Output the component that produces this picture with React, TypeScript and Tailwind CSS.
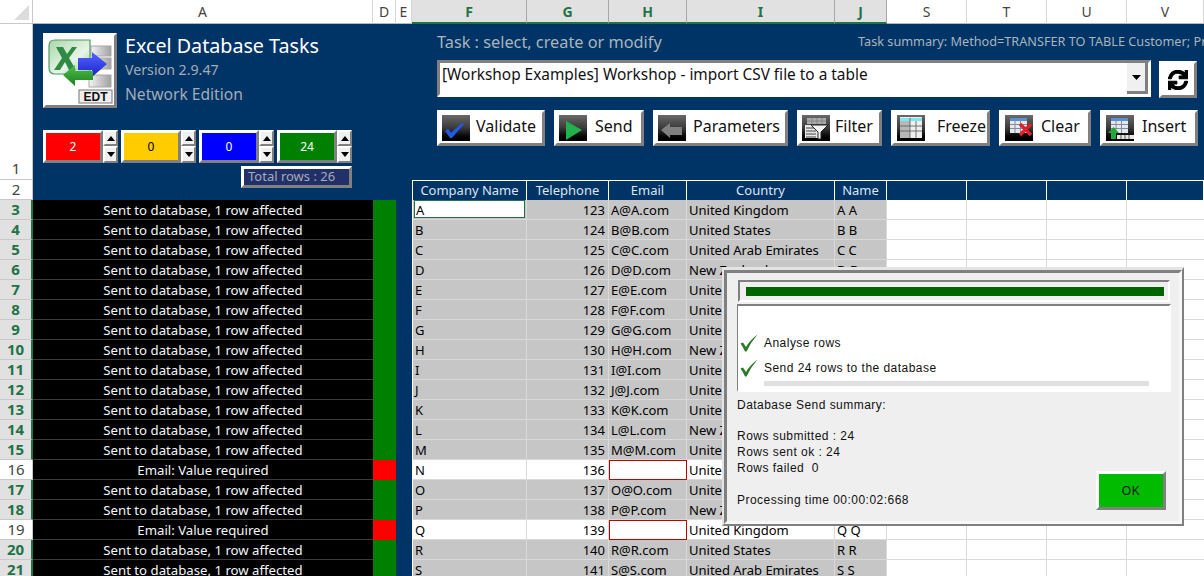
import { FaSync } from "react-icons/fa";

const bevel = "border-t-white border-l-white border-r-[#808080] border-b-[#808080]";

const columns = [
    { name: "A", w: "w-[340px]", on: false },
    { name: "D", w: "w-[23px]", on: false },
    { name: "E", w: "w-[16px]", on: false },
    { name: "F", w: "w-[115px]", on: true },
    { name: "G", w: "w-[82px]", on: true },
    { name: "H", w: "w-[78px]", on: true },
    { name: "I", w: "w-[148px]", on: true },
    { name: "J", w: "w-[52px]", on: true },
    { name: "S", w: "w-[80px]", on: false },
    { name: "T", w: "w-[80px]", on: false },
    { name: "U", w: "w-[80px]", on: false },
    { name: "V", w: "w-[77px]", on: false },
];

const countries = ["United Kingdom", "United States", "United Arab Emirates", "New Zealand"];
const letters = "ABCDEFGHIJKLMNOPQRS".split("");

function ColumnHeaders() {
    return (
        <div className="flex h-[24px] shrink-0">
            <div className="flex h-[24px] w-[33px] items-end justify-end border-r border-b border-[#c8c8c8] bg-white pr-[3px] pb-[3px]">
                <svg width="15" height="15" viewBox="0 0 15 15"><polygon points="15,0 15,15 0,15" fill="#dcdcdc" /></svg>
            </div>
            {columns.map((c) => (
                <div
                    key={c.name}
                    className={
                        c.on
                            ? `${c.w} flex h-[24px] items-center justify-center border-r border-r-[#a8a8a8] border-b-2 border-b-[#217346] bg-[#e1e1e1] text-[14px] font-bold text-[#217346]`
                            : `${c.w} flex h-[24px] items-center justify-center border-r border-r-[#d8d8d8] border-b border-b-[#b8b8b8] bg-white text-[14px] text-[#444]`
                    }
                >
                    {c.name}
                </div>
            ))}
        </div>
    );
}

function Logo() {
    return (
        <div className={`h-[75px] w-[74px] shrink-0 border-[3px] bg-white ${bevel}`}>
            <svg width="68" height="69" viewBox="3 3 68 69">
                <defs>
                    <linearGradient id="doc" x1="0" y1="0" x2="1" y2="1">
                        <stop offset="0" stopColor="#a8d8a8" />
                        <stop offset="0.6" stopColor="#e8f4e8" />
                        <stop offset="1" stopColor="#8fc79a" />
                    </linearGradient>
                    <linearGradient id="cyl" x1="0" y1="0" x2="1" y2="0">
                        <stop offset="0" stopColor="#f4f4f4" />
                        <stop offset="1" stopColor="#a0a0a0" />
                    </linearGradient>
                    <linearGradient id="blueArrow" x1="0" y1="0" x2="0" y2="1">
                        <stop offset="0" stopColor="#5566ff" />
                        <stop offset="1" stopColor="#1a22cc" />
                    </linearGradient>
                    <linearGradient id="greenArrow" x1="0" y1="0" x2="0" y2="1">
                        <stop offset="0" stopColor="#4cc04c" />
                        <stop offset="1" stopColor="#1c801c" />
                    </linearGradient>
                </defs>
                <rect x="48" y="13" width="20" height="10" fill="url(#cyl)" stroke="#a8a8a8" />
                <rect x="48" y="25" width="20" height="11" fill="url(#cyl)" stroke="#a8a8a8" />
                <rect x="46" y="42" width="22" height="12" fill="url(#cyl)" stroke="#a8a8a8" />
                <path d="M12 7 H47 V41 H12 Q6 41 6 35 V13 Q6 7 12 7 Z" fill="url(#doc)" stroke="#4f9a62" strokeWidth="1.2" />
                <path d="M13 14 H20 L24 21 L29 14 H34 L26 25 L33 37 H26 L22 29 L17 37 H11 L19 25 Z" fill="#2f8a45" />
                <polygon points="35,25 49,25 49,19 64,31 49,44 49,37 35,37" fill="url(#blueArrow)" />
                <polygon points="20,42 32,32 32,38 50,38 50,47 32,47 32,53" fill="url(#greenArrow)" />
                <rect x="36" y="57" width="33" height="13" fill="#eeeeee" stroke="#777" />
                <text x="52.5" y="68" textAnchor="middle" fontSize="12" fontWeight="700" fill="#111" fontFamily="Liberation Sans, sans-serif">EDT</text>
            </svg>
        </div>
    );
}

function SpinBox({ value, bg, fg }: { value: number; bg: string; fg: string }) {
    return (
        <div className="flex">
            <div className={`flex h-[33px] w-[60px] items-center justify-center border-[3px] text-[12px] ${bevel} ${bg} ${fg}`}>{value}</div>
            <div className="flex w-[15px] flex-col">
                <div className={`flex h-[16px] w-[15px] items-center justify-center border-2 bg-[#f0f0f0] ${bevel}`}>
                    <svg width="8" height="5" viewBox="0 0 8 5"><polygon points="4,0 8,5 0,5" fill="#000" /></svg>
                </div>
                <div className={`flex h-[17px] w-[15px] items-center justify-center border-2 bg-[#f0f0f0] ${bevel}`}>
                    <svg width="8" height="5" viewBox="0 0 8 5"><polygon points="0,0 8,0 4,5" fill="#000" /></svg>
                </div>
            </div>
        </div>
    );
}

function LeftPanel() {
    return (
        <div className="flex h-[176px] w-[379px] shrink-0 flex-col pt-[9px] pl-[10px]">
            <div className="flex gap-[8px]">
                <Logo />
                <div className="flex flex-col">
                    <span className="-mt-[1px] text-[19.7px] leading-[27px] text-white">Excel Database Tasks</span>
                    <span className="mt-[1px] text-[14.2px] leading-[20px] text-[#a3adb6]">Version 2.9.47</span>
                    <span className="mt-[3px] text-[15.6px] leading-[22px] text-[#a3adb6]">Network Edition</span>
                </div>
            </div>
            <div className="mt-[22px] flex gap-[3px]">
                <SpinBox value={2} bg="bg-[#ff0000]" fg="text-white" />
                <SpinBox value={0} bg="bg-[#ffcc00]" fg="text-black" />
                <SpinBox value={0} bg="bg-[#0000ff]" fg="text-white" />
                <SpinBox value={24} bg="bg-[#008000]" fg="text-white" />
            </div>
            <div className="mt-[3px] flex w-[309px] justify-end">
                <div className={`flex h-[22px] w-[111px] items-center border-[3px] bg-[#22306a] pl-[4px] text-[13px] text-[#a3adb6] ${bevel}`}>
                    Total rows : 26
                </div>
            </div>
        </div>
    );
}

function IconTile({ children }: { children: React.ReactNode }) {
    return (
        <div className="h-[26px] w-[28px] shrink-0 bg-linear-to-b from-[#6a6a6a] via-[#3a3a3a] to-black">
            <svg width="28" height="26" viewBox="0 0 28 26">{children}</svg>
        </div>
    );
}

function MiniTable({ top = "#5b8fd0" }: { top?: string }) {
    return (
        <g>
            <rect x="5" y="3" width="17" height="15" fill="#e8e8e8" />
            <rect x="5" y="3" width="17" height="3" fill={top} />
            <path d="M5 9.5H22M5 13.5H22M10 6V18M15.5 6V18" stroke="#7a8ea8" strokeWidth="1" />
        </g>
    );
}

const tools = [
    {
        label: "Validate",
        w: "w-[108px]",
        pl: "pl-[2px]",
        gap: "gap-[6px]",
        icon: <path d="M3 16 L6 13.5 L9 17.5 L20 8 L22 9 L10 23 L8 23 Z" fill="#2458e0" />,
    },
    {
        label: "Send",
        w: "w-[90px]",
        pl: "pl-[2px]",
        gap: "gap-[8px]",
        icon: <polygon points="7,6 7,25 23,15" fill="#22b14c" />,
    },
    {
        label: "Parameters",
        w: "w-[135px]",
        pl: "pl-[2px]",
        gap: "gap-[7px]",
        icon: <polygon points="3,15 12,8 12,12 24,12 24,20 12,20 12,23" fill="#808080" />,
    },
    {
        label: "Filter",
        w: "w-[85px]",
        pl: "pl-[2px]",
        gap: "gap-[5px]",
        icon: (
            <g>
                <path d="M5 3H24V9H5Z" fill="#aaaaaa" />
                <path d="M5 6H24M10 3V9M15 3V9M20 3V9" stroke="#888" />
                <path d="M3 10H16V23H3Z" fill="#e8e8e8" />
                <path d="M4 13H14M4 16H14M4 19H14M4 22H14" stroke="#444" />
                <polygon points="9,10 26,10 19,17 19,24 16,24 16,17" fill="#f4f4f4" stroke="#222" />
            </g>
        ),
    },
    {
        label: "Freeze",
        w: "w-[99px]",
        pl: "pl-[3px]",
        gap: "gap-[12px]",
        icon: (
            <g>
                <rect x="3" y="2" width="22" height="21" fill="#eeeeee" />
                <rect x="3" y="3" width="22" height="3" fill="#7fe8ee" />
                <rect x="3" y="6" width="10" height="17" fill="#b8b8b8" />
                <path d="M3 11H25M3 16H25M13 3V23M19 6V23" stroke="#555" strokeWidth="0.8" />
            </g>
        ),
    },
    {
        label: "Clear",
        w: "w-[92px]",
        pl: "pl-[3px]",
        gap: "gap-[8px]",
        icon: (
            <g>
                <MiniTable />
                <path d="M15 9 L26 20 M26 9 L15 20" stroke="#e0202a" strokeWidth="3.4" />
            </g>
        ),
    },
    {
        label: "Insert",
        w: "w-[98px]",
        pl: "pl-[3px]",
        gap: "gap-[8px]",
        icon: (
            <g>
                <MiniTable />
                <polygon points="7.5,12 13,18 10,18 10,24 5,24 5,18 2,18" fill="#22a838" />
                <rect x="11" y="20" width="17" height="4" fill="#e8e8e8" />
                <path d="M15 20V24M19 20V24M23 20V24" stroke="#555" />
            </g>
        ),
    },
];

function RightPanel() {
    return (
        <div className="flex h-[176px] w-[792px] shrink-0 flex-col">
            <div className="flex h-[156px] flex-col pl-[25px]">
                <div className="flex h-[36px] items-center justify-between">
                    <span className="text-[16.3px] text-[#a9b5bd]">Task : select, create or modify</span>
                    <span className="-mt-[2px] h-[18px] w-[346px] overflow-hidden text-[12.7px] leading-[18px] whitespace-nowrap text-[#a9b5bd]">
                        Task summary: Method=TRANSFER TO TABLE Customer; Pr
                    </span>
                </div>
                <div className="flex items-start gap-[8px]">
                    <div className="flex h-[37px] w-[714px] items-stretch justify-between border-[3px] border-t-[#808080] border-l-[#808080] border-r-white border-b-white bg-white">
                        <span className="pl-[2px] text-[15.4px] leading-[24px] whitespace-nowrap text-[#111]">
                            [Workshop Examples] Workshop - import CSV file to a table
                        </span>
                        <div className={`flex w-[21px] items-center justify-center border-r-[3px] border-b-[3px] bg-[#f0f0f0] ${bevel}`}>
                            <svg width="9" height="5" viewBox="0 0 9 5"><polygon points="0,0 9,0 4.5,5" fill="#000" /></svg>
                        </div>
                    </div>
                    <div className={`mt-[1px] flex h-[37px] w-[38px] items-center justify-center border-[3px] bg-white ${bevel}`}>
                        <FaSync size={20} color="#000" className="stroke-[30]" />
                    </div>
                </div>
                <div className="mt-[12px] flex gap-[9px]">
                    {tools.map((t) => (
                        <div key={t.label} className={`flex h-[36px] items-center border-[3px] bg-white text-[16px] text-[#111] ${t.w} ${t.pl} ${t.gap} ${bevel}`}>
                            <IconTile>{t.icon}</IconTile>
                            <span className="pb-[4px]">{t.label}</span>
                        </div>
                    ))}
                </div>
            </div>
            <div className="flex h-[20px]">
                {columns.slice(3).map((c, i) => (
                    <div key={c.name} className={`${c.w} flex items-center justify-center border-t border-r border-white text-[13px] leading-none text-[#dbe6f0] ${i === 0 ? "border-l" : ""}`}>
                        {["Company Name", "Telephone", "Email", "Country", "Name"][i] ?? ""}
                    </div>
                ))}
            </div>
        </div>
    );
}

function DataRow({ index }: { index: number }) {
    const letter = letters[index];
    const failed = letter === "N" || letter === "Q";
    const fill = failed ? "bg-white" : "bg-[#c6c6c6]";
    const line = "border-r border-b border-[#d9d9d9]";
    return (
        <div className="flex h-[20px] shrink-0 text-[13px] leading-[21px]">
            <div
                className={
                    failed
                        ? "flex w-[33px] items-center justify-center border-r border-b border-[#c8c8c8] bg-white text-[15px] text-[#444]"
                        : "flex w-[33px] items-center justify-center border-r-2 border-b border-r-[#217346] border-b-[#c8c8c8] bg-[#e1e1e1] text-[15px] font-bold text-[#217346]"
                }
            >
                {index + 3}
            </div>
            <div className="w-[340px] border-b border-[#3c3c3c] bg-black text-center text-[13.2px] text-[#f2f6fa]">
                {failed ? "Email: Value required" : "Sent to database, 1 row affected"}
            </div>
            <div className={failed ? "w-[23px] bg-[#ff0000]" : "w-[23px] bg-[#008000]"} />
            <div className="w-[17px] border-r border-white bg-[#003366]" />
            {index === 0 ? (
                <div className={`w-[114px] pr-[1px] pb-[1px] pl-[1px] ${line} ${fill}`}>
                    <div className="h-[18px] border border-[#217346] bg-white pl-[1px] leading-[19px]">{letter}</div>
                </div>
            ) : (
                <div className={`w-[114px] pl-[2px] ${line} ${fill}`}>{letter}</div>
            )}
            <div className={`w-[82px] pr-[3px] text-right ${line} ${fill}`}>{123 + index}</div>
            <div className={failed ? "w-[78px] border border-[#c00000] bg-white" : `w-[78px] pl-[2px] ${line} ${fill}`}>
                {failed ? "" : `${letter}@${letter}.com`}
            </div>
            <div className={`w-[148px] pl-[2px] ${line} ${fill}`}>{countries[index % 4]}</div>
            <div className={`w-[52px] pl-[2px] ${line} ${fill}`}>{letter} {letter}</div>
            <div className="w-[80px] border-r border-b border-[#d9d9d9]" />
            <div className="w-[80px] border-r border-b border-[#d9d9d9]" />
            <div className="w-[80px] border-r border-b border-[#d9d9d9]" />
            <div className="w-[77px] border-b border-[#d9d9d9]" />
        </div>
    );
}

function Tick() {
    return (
        <svg width="18" height="18" viewBox="0 0 18 18" className="shrink-0">
            <path d="M0.5 9.5 L3 8.5 L6 13 Q10 6 17.5 0.5 Q11 8 6.5 17.5 L5 17.5 Q3 13 0.5 9.5 Z" fill="#2a7a2a" />
        </svg>
    );
}

function SendDialog() {
    return (
        <div className="absolute top-[267px] left-[722px] h-[259px] w-[462px] border-2 border-t-[3px] border-t-[#e4e4e4] border-l-[#e4e4e4] border-r-[#808080] border-b-[#808080] font-['Liberation_Sans',sans-serif] text-[12px] tracking-[0.47px] text-[#111]">
            <div className="flex h-full flex-col border-[3px] border-t-[#808080] border-l-[#808080] border-r-[#f8f8f8] border-b-[#f8f8f8] bg-[#efefef] pt-[7px] pl-[10px]">
                <div className="ml-[1px] flex h-[22px] w-[432px] items-center border-2 border-t-[#808080] border-l-[#808080] border-r-white border-b-white pr-[4px] pl-[6px]">
                    <div className="h-[9px] w-full bg-[#006400]" />
                </div>
                <div className="mt-[2px] flex h-[88px] w-[434px] flex-col border-t-2 border-r-2 border-b-2 border-l border-t-[#808080] border-l-[#808080] border-r-white border-b-white bg-white pt-[25px] pl-[2px]">
                    <div className="flex h-[24px] items-center gap-[6px]">
                        <Tick />
                        <span>Analyse rows</span>
                    </div>
                    <div className="mt-[1px] flex h-[24px] items-center gap-[6px]">
                        <Tick />
                        <span>Send 24 rows to the database</span>
                    </div>
                    <div className="mt-[1px] ml-[24px] h-[5px] w-[385px] bg-[#e0e0e0]" />
                </div>
                <div className="flex flex-1">
                    <div className="mt-[5px] flex w-[359px] flex-col leading-[16px]">
                        <span>Database Send summary:</span>
                        <span className="mt-[15px]">Rows submitted : 24</span>
                        <span>Rows sent ok : 24</span>
                        <span className="whitespace-pre">Rows failed  0</span>
                        <span className="mt-[16px]">Processing time 00:00:02:668</span>
                    </div>
                    <div className={`mt-[79px] flex h-[39px] w-[70px] items-center justify-center border-[3px] bg-[#00bb00] text-[#111] ${bevel}`}>OK</div>
                </div>
            </div>
        </div>
    );
}

export default function App() {
    return (
        <div className="relative flex h-[576px] w-[1204px] flex-col overflow-hidden bg-white font-['Noto_Sans',sans-serif]">
            <ColumnHeaders />
            <div className="flex h-[176px] shrink-0">
                <div className="flex w-[33px] flex-col text-[15px] text-[#444]">
                    <div className="flex h-[156px] items-end justify-center border-r border-b border-[#c8c8c8]">1</div>
                    <div className="flex h-[20px] items-center justify-center border-r border-b border-[#c8c8c8]">2</div>
                </div>
                <div className="flex flex-1 bg-[#003366]">
                    <LeftPanel />
                    <RightPanel />
                </div>
            </div>
            {letters.map((_, i) => (
                <DataRow key={i} index={i} />
            ))}
            <SendDialog />
        </div>
    );
}
